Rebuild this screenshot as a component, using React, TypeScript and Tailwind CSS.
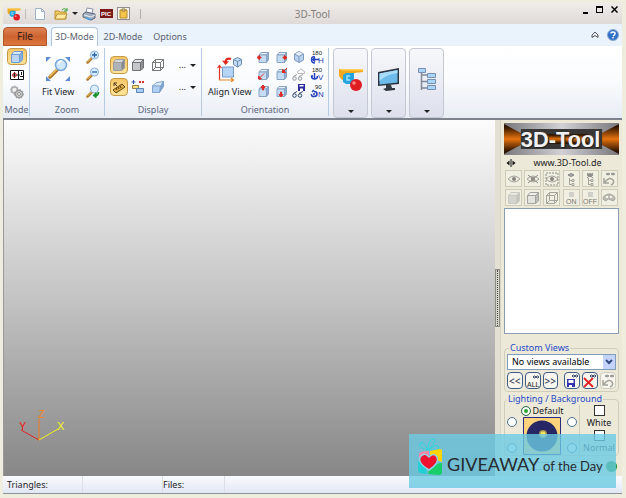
import { type ReactNode } from "react";
import { clsx } from "clsx";

type IconProps = { className?: string };

type CubeProps = {
    front?: string;
    top?: string;
    side?: string;
    stroke?: string;
    className?: string;
};

function Svg({ box, className, children }: { box: string; className?: string; children: ReactNode }) {
    return (
        <svg viewBox={box} className={clsx("block shrink-0", className)} fill="none" aria-hidden="true">
            {children}
        </svg>
    );
}

function Cube({ front = "#b9d5f3", top = "#dcebfa", side = "#86aedb", stroke = "#7f9cc4", className = "size-3.5" }: CubeProps) {
    return (
        <Svg box="0 0 14 14" className={className}>
            <path d="M1.500 4.500 4 1.500h8.500l-3 3z" fill={top} stroke={stroke} strokeLinejoin="round" />
            <path d="m9.500 4.500 3-3V10l-3 2.500z" fill={side} stroke={stroke} strokeLinejoin="round" />
            <path d="M1.500 4.500h8v8h-8z" fill={front} stroke={stroke} />
        </Svg>
    );
}

function LogoIcon({ className }: IconProps) {
    return (
        <Svg box="0 0 26 26" className={className}>
            <path d="M1 3h24v3L7 8v4l-3 2-3-4z" fill="#f5a81c" />
            <path d="M1 3h24v1.500H4z" fill="#ffd15c" />
            <path d="m5 9 3-2h8v8l-3 3H8l-3-2z" fill="#24a5df" />
            <path d="M12 10H9v4h3" stroke="#a5e2fa" strokeWidth="1.500" />
            <circle cx="18" cy="19" r="6" fill="#df1d25" />
            <circle cx="16" cy="17" r="1.800" fill="#ff8583" />
        </Svg>
    );
}

function Magnifier({ sign, className = "size-3.5" }: { sign: string; className?: string }) {
    return (
        <Svg box="0 0 14 14" className={className}>
            <path d="m1.500 12.500 4.500-4.500" stroke="#a9762b" strokeWidth="2.500" strokeLinecap="round" />
            <path d="m1.500 12 4-4" stroke="#f4c765" strokeLinecap="round" />
            <circle cx="8.500" cy="5" r="4" fill="#dceeff" stroke="#86aed8" />
            {sign === "plus" && <path d="M6 5h5M8.500 2.500v5" stroke="#2260ad" strokeWidth="1.300" />}
            {sign === "minus" && <path d="M6 5h5" stroke="#2260ad" strokeWidth="1.300" />}
            {sign === "back" && <path d="M12.500 8q0 4-4 3.500M10.500 9 8 11.500l2.500 2" stroke="#169329" strokeWidth="1.800" />}
        </Svg>
    );
}

function FitIcon() {
    return (
        <Svg box="0 0 26 26" className="size-[26px]">
            <path d="M1 6V1h5L1 6Zm19-5h5v5l-5-5ZM1 20v5h5l-5-5Zm24 0v5h-5l5-5Z" fill="#5c8dd4" />
            <path d="m5 21 8-8" stroke="#a77429" strokeWidth="3.500" strokeLinecap="round" />
            <path d="m5 20 7-7" stroke="#f4c765" strokeWidth="1.500" strokeLinecap="round" />
            <circle cx="16" cy="9" r="5.500" fill="#cfe8ff" stroke="#77a8de" strokeWidth="1.500" />
            <path d="M13 8q1-3 4-3" stroke="#fff" strokeWidth="1.500" />
        </Svg>
    );
}

function AlignIcon() {
    return (
        <Svg box="0 0 26 26" className="size-[26px]">
            <path d="M5.500 11h11v10h-11z" fill="#b6d4f6" stroke="#769bc6" />
            <path d="M2.500 24V10m-2 2 2-2.500 2 2.500" stroke="#e0302a" strokeWidth="1.200" />
            <path d="M2 24h14m-2-2 2.500 2-2.500 2" stroke="#e78a25" strokeWidth="1.200" />
            <path d="M14 3Q9 1.500 8.500 6" stroke="#e12620" strokeWidth="2.200" />
            <path d="M5 4.500 8.500 9 12 5.500z" fill="#e12620" />
            <path d="m16.500 3.500 4-2 4 2v5l-4 2.500-4-2.500z" fill="#c3dcf5" stroke="#6c8cb2" />
            <path d="m16.500 3.500 4 2 4-2M20.500 5.500V11" stroke="#6c8cb2" />
        </Svg>
    );
}

function ArrowCube({ arrow }: { arrow: string }) {
    return (
        <Svg box="0 0 14 14" className="size-3.5">
            <path d="M3 5 5 2.500h7.500l-2 2.500z" fill="#e4effb" stroke="#8aa3c2" />
            <path d="m10.500 5 2-2.500V10l-2 2.500z" fill="#8cb0d9" stroke="#8aa3c2" />
            <path d="M3 5h7.500v7.500H3z" fill="#c4dbf4" stroke="#8aa3c2" />
            <path d={arrow} fill="#df2821" stroke="#df2821" strokeLinejoin="round" />
        </Svg>
    );
}

function IsoCube() {
    return (
        <Svg box="0 0 14 14" className="size-3.5">
            <path d="m2.500 4 4.500-2.500L11.500 4v6L7 12.500 2.500 10z" fill="#b9d3f0" stroke="#7f9abb" />
            <path d="m3 4 4-2 4 2-4 2z" fill="#e6f0fb" />
            <path d="m2.500 4 4.500 2.500L11.500 4M7 6.500v6" stroke="#7f9abb" />
        </Svg>
    );
}

function GlassesIcon({ saved }: { saved?: boolean }) {
    return (
        <Svg box="0 0 14 14" className="size-3.5">
            {saved ? (
                <>
                    <path d="M6 0h7v7H6z" fill="#2b2b9f" />
                    <path d="M7.500 1h4v1.500h-4zM8 4.500h3V7H8z" fill="#fff" />
                </>
            ) : (
                <path d="M6 6.500q-1.500-2.500 1-3 1.500-3 4 0 2.500 1 1.500 3z" fill="#fafafa" stroke="#b9b9b9" />
            )}
            <path d="M1.500 9.500 5 7.500m2 2 4-2" stroke={saved ? "#344c70" : "#9c9c9c"} />
            <circle cx="2.500" cy="11.500" r="1.800" fill="#e5edf5" stroke={saved ? "#344c70" : "#9c9c9c"} />
            <circle cx="8" cy="11.500" r="1.800" fill="#e5edf5" stroke={saved ? "#344c70" : "#9c9c9c"} />
        </Svg>
    );
}

function RotateIcon({ degrees, axis }: { degrees: string; axis: string }) {
    return (
        <Svg box="0 0 14 14" className="size-3.5">
            <text x={degrees === "90" ? 5 : 2} y="5" fontSize="6" fontFamily="Liberation Sans, sans-serif" fill="#222">{degrees}</text>
            {axis === "H" && <path d="M5 7Q1.500 6 1.500 9.500T5 13M3 9.500h6M5 7.500l-2 2 2 2" stroke="#2442bd" strokeWidth="1.500" />}
            {axis === "V" && <path d="M4.500 6v6M1.500 9q0 3 3 3t3-3M1 9h2" stroke="#2442bd" strokeWidth="1.500" />}
            {axis === "N" && <path d="M4 6 2 8M4 7.500q3 0 3 2.500t-3 2.500T1.500 10M4 9v2" stroke="#2442bd" strokeWidth="1.500" />}
            <text x="8" y="13" fontSize="8" fontFamily="Liberation Sans, sans-serif" fill="#2442bd">{axis}</text>
        </Svg>
    );
}

function DrawingIcon() {
    return (
        <Svg box="0 0 14 12" className="h-3 w-3.5">
            <path d="M.5 1.500h13v9H.5z" fill="#fff" stroke="#111" />
            <path d="M2 6h8M4.500 3v6M8.500 2v8M10 7.500h3" stroke="#111" />
            <circle cx="4.500" cy="6" r="2" stroke="#d33" />
            <path d="M11.500 3v3" stroke="#111" />
        </Svg>
    );
}

function GearsIcon() {
    return (
        <Svg box="0 0 14 14" className="size-3.5">
            <circle cx="4.500" cy="5" r="3" fill="#eee" stroke="#aaa" strokeWidth="1.500" />
            <circle cx="4.500" cy="5" r="4" stroke="#aaa" strokeDasharray="1.500 1.500" />
            <circle cx="9" cy="9" r="3.500" fill="#ddd" stroke="#999" strokeWidth="1.500" />
            <circle cx="9" cy="9" r="4.500" stroke="#999" strokeDasharray="1.500 1.500" />
            <circle cx="9" cy="9" r="1.500" fill="#fff" stroke="#888" />
        </Svg>
    );
}

function MonitorIcon() {
    return (
        <Svg box="0 0 26 26" className="size-[26px]">
            <path d="m2 6 21-4v16L2 20z" fill="#2b3440" />
            <path d="m3.500 7.500 18-3.500v12.500l-18 2z" fill="#6dbbea" />
            <path d="m3.500 7.500 18-3.500v3Q11 8 3.500 15z" fill="#a9dcf8" />
            <path d="M10 19h5l1 3h3v2l-9 1-3-2 3-1z" fill="#333a43" />
        </Svg>
    );
}

function TreeIcon() {
    return (
        <Svg box="0 0 20 24" className="h-6 w-5">
            <path d="M4.500 5v18M4 8h6M4 14.500h6M4 21h6" stroke="#7f8998" strokeWidth="1.500" />
            <path d="M1.500 1.500h7v4h-7zM10.500 6.500h8v4h-8zM10.500 12.500h8v4h-8zM10.500 18.500h8v4h-8z" fill="#a8d5f8" stroke="#7790b2" />
        </Svg>
    );
}

function EyeIcon({ mark }: { mark?: string }) {
    return (
        <Svg box="0 0 14 14" className="size-3.5">
            <path d="M1 7q6-6 12 0-6 6-12 0Z" fill="#efeee4" stroke="#a3a39a" />
            <circle cx="7" cy="7" r="2" fill="#85857d" />
            {mark && <path d={mark} stroke="#8d8d84" strokeDasharray={mark.endsWith("z") ? "2 1" : undefined} />}
        </Svg>
    );
}

function EyeTree({ crossed }: { crossed?: boolean }) {
    return (
        <Svg box="0 0 14 14" className="size-3.5">
            <path d="M4 3q3-3 6 0-3 3-6 0Z" fill="#aaa" stroke="#888" />
            <path d="M5.500 6v7M5 8.500h3M5 12.500h3M8 7.500h2v2H8zM8 11.500h2v2H8z" stroke="#a5a59d" />
            {crossed && <path d="m4 1 6 5m0-5L4 6" stroke="#888" />}
        </Svg>
    );
}

function UndoEye() {
    return (
        <Svg box="0 0 14 14" className="size-3.5">
            <path d="M4 2q2-2 4 0-2 2-4 0Zm5 0q2-2 4 0-2 2-4 0Z" fill="#999" stroke="#999" />
            <path d="M2 6v5h5M3 10q5-6 8-2 2 3-2 5" stroke="#a2a299" strokeWidth="1.500" />
        </Svg>
    );
}

function RibbonButton({ label, active, className, children }: { label: string; active?: boolean; className?: string; children: ReactNode }) {
    return (
        <button
            type="button"
            aria-label={label}
            className={clsx(
                "flex items-center justify-center",
                active && "rounded-sm border border-[#c69a45] bg-gradient-to-b from-[#f7c768] to-[#ffe49a]",
                className,
            )}
        >
            {children}
        </button>
    );
}

function Group({ label, className, children }: { label: string; className?: string; children: ReactNode }) {
    return (
        <div className={clsx("flex flex-col justify-between border-r border-[#b4cbe3]", className)}>
            {children}
            <div className="text-center leading-3 text-[#5c6980]">{label}</div>
        </div>
    );
}

function BigButton({ label, children }: { label: string; children: ReactNode }) {
    return (
        <button
            type="button"
            aria-label={label}
            className="flex h-[70px] w-[35px] flex-col items-center justify-between rounded-sm border border-[#c3c8d3] bg-gradient-to-b from-[#f7f8fb] to-[#dce0ec] pt-4"
        >
            <span className="flex h-7 items-center">{children}</span>
            <span className="pb-1"><Caret /></span>
        </button>
    );
}

function Caret() {
    return (
        <Svg box="0 0 6 3" className="h-[3px] w-1.5">
            <path d="M0 0h6L3 3z" fill="#222" />
        </Svg>
    );
}

function TitleBar() {
    return (
        <header className="grid h-[21px] grid-cols-[1fr_auto_1fr] items-center bg-gradient-to-b from-[#f0ecea] to-[#dfdad7] px-1">
            <div className="flex items-center">
                <LogoIcon className="size-[14px]" />
                <span className="ml-1 h-2.5 w-px bg-[#c0bcb8]" />
                <button type="button" aria-label="New" className="ml-2">
                    <Svg box="0 0 12 14" className="h-3.5 w-3">
                        <path d="M1.500 1.500h6l3 3v8h-9z" fill="#fafdff" stroke="#9fb1c9" />
                        <path d="M7.500 1.500v3h3" stroke="#9fb1c9" />
                    </Svg>
                </button>
                <button type="button" aria-label="Open" className="ml-2 flex items-center gap-1">
                    <Svg box="0 0 14 14" className="size-3.5">
                        <path d="M1 4h4l1 1h6v7H1z" fill="#f4cf62" stroke="#b99231" />
                        <path d="m1 12 2-5h10l-2 5z" fill="#ffe9a0" stroke="#b99231" />
                        <path d="M8 3q3-3 5 1m0-3v3h-3" stroke="#36a136" />
                    </Svg>
                    <Caret />
                </button>
                <button type="button" aria-label="Print" className="ml-1">
                    <Svg box="0 0 14 14" className="size-3.5">
                        <path d="m4 6 1-5 6 1-1 5z" fill="#fff" stroke="#8a97ab" />
                        <path d="m1 7 3-2 9 2v4l-4 2-8-3z" fill="#9fadbf" stroke="#596575" />
                        <path d="m2 8 7 2 4-2" stroke="#e7edf4" />
                        <path d="m4 11 5 2" stroke="#4b9ce9" strokeWidth="1.500" />
                    </Svg>
                </button>
                <button type="button" aria-label="Save picture" className="ml-1">
                    <Svg box="0 0 13 9" className="h-[9px] w-[13px]">
                        <path d="M0 0h13v9H0z" fill="#7b1919" />
                        <text x="1" y="7" fontSize="6" fontWeight="bold" fontFamily="Liberation Sans, sans-serif" fill="#fff">PIC</text>
                    </Svg>
                </button>
                <button type="button" aria-label="Copy to clipboard" className="ml-1">
                    <Svg box="0 0 13 13" className="size-[13px]">
                        <path d="M.5.500h12v12H.5z" fill="#f6f3ee" stroke="#333" strokeDasharray="1 1" />
                        <path d="M3 3h7v8H3z" fill="#f4c44c" stroke="#b98a27" />
                        <path d="M5 2h3v2H5z" fill="#fff2c5" stroke="#957634" />
                    </Svg>
                </button>
                <span className="ml-2.5 h-2.5 w-px bg-[#b4b0ac]" />
            </div>
            <h1 className="text-[10px] leading-4 text-[#85817e]">3D-Tool</h1>
            <div className="flex items-start justify-end gap-2 self-start pt-[3px]">
                <button type="button" aria-label="Minimize" className="flex h-2 w-[5px] items-end"><span className="h-0.5 w-full bg-black" /></button>
                <button type="button" aria-label="Maximize" className="h-[7px] w-[7px] border border-t-2 border-black" />
                <button type="button" aria-label="Close">
                    <Svg box="0 0 7 7" className="size-[7px]"><path d="m.5.500 6 6m0-6-6 6" stroke="#000" strokeWidth="1.500" /></Svg>
                </button>
            </div>
        </header>
    );
}

function TabRow() {
    return (
        <nav className="flex h-[22px] items-end bg-[#eaf3fb] text-[9px] text-[#5a6270]">
            <button type="button" className="h-[19px] w-11 rounded-t-sm border border-[#b4562b] bg-gradient-to-b from-[#df8254] via-[#cc6330] to-[#dd773e] text-[10px] text-[#3b2018]">File</button>
            <button type="button" className="ml-1 h-[19px] w-[47px] rounded-t-sm border border-b-0 border-[#b1c6db] bg-white">3D-Mode</button>
            <button type="button" className="h-[19px] w-[50px]">2D-Mode</button>
            <button type="button" className="h-[19px] w-11">Options</button>
            <div className="ml-auto flex h-full items-center gap-2 pr-[3px]">
                <button type="button" aria-label="Collapse ribbon">
                    <Svg box="0 0 8 8" className="size-2"><path d="m1 4 3-3 3 3v2.500L4 4.500l-3 2z" stroke="#555" /></Svg>
                </button>
                <button type="button" aria-label="Help">
                    <Svg box="0 0 12 12" className="size-3">
                        <circle cx="6" cy="6" r="5.500" fill="#2f70c8" stroke="#8aa9cf" />
                        <path d="M4 4.500Q4 3 6 3t2 1.500T6 7M6 8v1.500" stroke="#fff" strokeWidth="1.500" />
                    </Svg>
                </button>
            </div>
        </nav>
    );
}

function Ribbon() {
    return (
        <div className="flex h-[74px] border-b-2 border-[#7c838c] bg-gradient-to-b from-white via-[#f9fbfd] to-[#e8edf5] py-0.5 pl-px">
            <Group label="Mode" className="w-[26px]">
                <div className="flex flex-col items-center gap-1">
                    <RibbonButton label="3D view" active className="h-[17px] w-5">
                        <Cube stroke="#6d9bd2" />
                    </RibbonButton>
                    <RibbonButton label="Drawing view"><DrawingIcon /></RibbonButton>
                    <RibbonButton label="Settings"><GearsIcon /></RibbonButton>
                </div>
            </Group>
            <Group label="Zoom" className="w-[75px]">
                <div className="flex justify-between pr-1 pl-3">
                    <button type="button" className="flex flex-col items-center gap-1 pt-2 text-[#20242c]">
                        <FitIcon />
                        <span className="leading-3">Fit View</span>
                    </button>
                    <div className="flex flex-col gap-[3px] pt-0.5">
                        <RibbonButton label="Zoom in"><Magnifier sign="plus" /></RibbonButton>
                        <RibbonButton label="Zoom out"><Magnifier sign="minus" /></RibbonButton>
                        <RibbonButton label="Previous zoom"><Magnifier sign="back" /></RibbonButton>
                    </div>
                </div>
            </Group>
            <Group label="Display" className="w-[97px]">
                <div className="grid grid-cols-[18px_20px_20px_18px_10px] items-center gap-y-1 pt-2 pl-[5px] text-[#222]">
                    <RibbonButton label="Shaded" active className="size-[18px]">
                        <Cube front="#aeb3b8" top="#d8dbde" side="#84898f" stroke="#9b9da0" />
                    </RibbonButton>
                    <RibbonButton label="Shaded with edges">
                        <Cube front="#c6c7ca" top="#e5e5e8" side="#8e9095" stroke="#707277" />
                    </RibbonButton>
                    <RibbonButton label="Wireframe">
                        <Svg box="0 0 14 14" className="size-3.5">
                            <path d="M1.500 4.500h8v8h-8zM4.500 1.500h8v8h-8zM1.500 4.500l3-3M9.500 4.500l3-3M9.500 12.500l3-3M1.500 12.500l3-3" stroke="#777" />
                        </Svg>
                    </RibbonButton>
                    <button type="button" aria-label="More display styles" className="text-right">...</button>
                    <span className="pl-1"><Caret /></span>
                    <RibbonButton label="Measure" active className="size-[18px]">
                        <Svg box="0 0 14 14" className="size-3.5">
                            <path d="m1 10 9-6 3 3-9 6z" fill="#dda73c" stroke="#5e4718" />
                            <path d="m4 8 1 2m1-3 1 2m1-3 1 2M2 3l3 3M2 6V3h3" stroke="#4e3b19" />
                        </Svg>
                    </RibbonButton>
                    <RibbonButton label="Explode">
                        <Svg box="0 0 14 14" className="size-3.5">
                            <path d="M1.500 5.500h6v3h-6z" fill="#ffe07a" stroke="#947f45" />
                            <path d="M5.500 8.500h7v4h-7z" fill="#a9cdf3" stroke="#5e83b0" />
                            <path d="M2.500 0v4M.5 2h4" stroke="#3051b5" />
                            <path d="m8 1 2 2m0-2L8 3m3-2 2 2m0-2-2 2" stroke="#df2929" />
                        </Svg>
                    </RibbonButton>
                    <RibbonButton label="Section">
                        <Svg box="0 0 14 14" className="size-3.5">
                            <path d="m1.500 6 4-3.500 7-1-3 5z" fill="#d8e9fa" stroke="#80a2ca" />
                            <path d="m9.500 6.500 3-5v5l-4 6z" fill="#77a4d6" stroke="#80a2ca" />
                            <path d="M1.500 6h8l-1 6.500h-7z" fill="#b0d0f2" stroke="#80a2ca" />
                        </Svg>
                    </RibbonButton>
                    <button type="button" aria-label="More display tools" className="text-right">...</button>
                    <span className="pl-1"><Caret /></span>
                </div>
            </Group>
            <Group label="Orientation" className="w-[127px]">
                <div className="flex justify-between pr-1 pl-1.5">
                    <button type="button" className="flex flex-col items-center gap-1 pt-2 text-[#20242c]">
                        <AlignIcon />
                        <span className="leading-3">Align View</span>
                    </button>
                    <div className="grid grid-cols-4 gap-x-1 gap-y-[3px] pt-0.5">
                        <RibbonButton label="Left view"><ArrowCube arrow="M5 7H3.500V5.500L1 7.500l2.500 2V8H5z" /></RibbonButton>
                        <RibbonButton label="Right view"><ArrowCube arrow="M9 7h1.500V5.500l2.500 2-2.500 2V8H9z" /></RibbonButton>
                        <RibbonButton label="Isometric view"><IsoCube /></RibbonButton>
                        <RibbonButton label="Rotate horizontally"><RotateIcon degrees="180" axis="H" /></RibbonButton>
                        <RibbonButton label="Front view"><ArrowCube arrow="m8 6.500-4 4M2.500 9v3h3z" /></RibbonButton>
                        <RibbonButton label="Back view"><ArrowCube arrow="m13 1-3 3M8.500 2.500v3h3z" /></RibbonButton>
                        <RibbonButton label="Own view"><GlassesIcon /></RibbonButton>
                        <RibbonButton label="Rotate vertically"><RotateIcon degrees="180" axis="V" /></RibbonButton>
                        <RibbonButton label="Top view"><ArrowCube arrow="M6.500 6V3.500H5L7 1l2 2.500H7.500V6z" /></RibbonButton>
                        <RibbonButton label="Bottom view"><ArrowCube arrow="M6.500 8v2.500H5L7 13l2-2.500H7.500V8z" /></RibbonButton>
                        <RibbonButton label="Save view"><GlassesIcon saved /></RibbonButton>
                        <RibbonButton label="Rotate by normal"><RotateIcon degrees="90" axis="N" /></RibbonButton>
                    </div>
                </div>
            </Group>
            <div className="flex gap-[3px] pl-1">
                <BigButton label="Tools"><LogoIcon className="size-[26px]" /></BigButton>
                <BigButton label="Screen"><MonitorIcon /></BigButton>
                <BigButton label="Model tree"><TreeIcon /></BigButton>
            </div>
        </div>
    );
}

function Axes() {
    return (
        <svg viewBox="0 0 50 40" className="mb-[30px] ml-3.5 h-10 w-[50px]" fill="none" fontFamily="Liberation Sans, sans-serif" fontSize="11">
            <path d="M21 34 3 24" stroke="#e52222" />
            <path d="M21 34V13" stroke="#ef7d1a" />
            <path d="m21 34 19-11" stroke="#f3f31b" />
            <text x="1" y="24" fill="#f01818">Y</text>
            <text x="20" y="12" fill="#f58220">Z</text>
            <text x="39" y="24" fill="#f7f71a">X</text>
        </svg>
    );
}

function Banner() {
    return (
        <svg viewBox="0 0 116 32" className="block h-8 w-full" preserveAspectRatio="none" role="img" aria-label="3D-Tool">
            <defs>
                <linearGradient id="metal" x1="0" x2="1">
                    <stop stopColor="#77777c" />
                    <stop offset=".5" stopColor="#d2d2d6" />
                    <stop offset="1" stopColor="#77777c" />
                </linearGradient>
                <linearGradient id="orange" x1="0" x2="0" y1="0" y2="1">
                    <stop offset=".1" stopColor="#2e1500" />
                    <stop offset=".5" stopColor="#e8730f" />
                    <stop offset=".9" stopColor="#2e1500" />
                </linearGradient>
            </defs>
            <path d="M0 0h116v32H0z" fill="url(#metal)" />
            <path d="m0 1 17 9h82l17-9v30l-17-9H17L0 31z" fill="url(#orange)" />
            <path d="M17 6h82v20H17z" fill="#393735" />
            <path d="M43 11h42v10H43z" fill="url(#orange)" />
            <text x="18" y="25" fontSize="22" fontWeight="bold" fontFamily="Liberation Sans, sans-serif" fill="#222">3D-Tool</text>
            <text x="17" y="24" fontSize="22" fontWeight="bold" fontFamily="Liberation Sans, sans-serif" fill="#f2f2f2">3D-Tool</text>
        </svg>
    );
}

function ToolButton({ label, children }: { label: string; children: ReactNode }) {
    return (
        <button type="button" aria-label={label} className="flex size-[17px] items-center justify-center border border-[#cecbb9] bg-[#f1efe2]">
            {children}
        </button>
    );
}

function SwitchIcon({ text }: { text: string }) {
    return (
        <Svg box="0 0 14 14" className="size-3.5">
            <path d="M5 1h5v5H5z" fill="#d0cfc9" />
            <text x={text === "ON" ? 2 : 0} y="13" fontSize="7" fontFamily="Liberation Sans, sans-serif" fill="#77776f">{text}</text>
        </Svg>
    );
}

function ViewButton({ label, disabled, children }: { label: string; disabled?: boolean; children: ReactNode }) {
    return (
        <button
            type="button"
            aria-label={label}
            disabled={disabled}
            className={clsx(
                "flex h-[17px] flex-1 items-center justify-center rounded-sm border bg-[#f6f5ee] text-[10px] leading-3",
                disabled ? "border-[#cfccbc]" : "border-[#3e5c85] text-[#1d2c48]",
            )}
        >
            {children}
        </button>
    );
}

function LightRadio({ label, checked }: { label: string; checked?: boolean }) {
    return (
        <input
            type="radio"
            name="light"
            aria-label={label}
            defaultChecked={checked}
            className="block size-2.5 shrink-0 appearance-none rounded-full border border-[#4b7290] bg-white checked:border-[#3e6f55] checked:bg-[#28a52c] checked:shadow-[inset_0_0_0_2px_white]"
        />
    );
}

function BackgroundOption({ label }: { label: string }) {
    return (
        <label className="flex flex-col items-center">
            <input type="checkbox" className="block size-[11px] appearance-none border border-[#333] bg-white" />
            <span className="leading-[14px]">{label}</span>
        </label>
    );
}

function SidePanel() {
    return (
        <aside className="flex w-[122px] shrink-0 flex-col border-l border-[#d8d4c4] bg-[#ece9d8] px-[3px] pt-[3px] text-[#222]">
            <Banner />
            <div className="flex h-[15px] items-center pl-0.5">
                <Svg box="0 0 10 8" className="h-2 w-2.5">
                    <path d="M5 0v8" stroke="#111" />
                    <path d="M3.500 1.500v5L.5 4zM6.500 1.500v5l3-2.500z" fill="#111" />
                </Svg>
                <a href="#home" className="flex-1 text-center text-[9px]">www.3D-Tool.de</a>
            </div>
            <div className="grid grid-cols-6 justify-items-center gap-y-0.5">
                <ToolButton label="Show"><EyeIcon /></ToolButton>
                <ToolButton label="Hide"><EyeIcon mark="m2 3 10 8m0-8L2 11" /></ToolButton>
                <ToolButton label="Show selection"><EyeIcon mark="M1 1h12v12H1z" /></ToolButton>
                <ToolButton label="Show branch"><EyeTree /></ToolButton>
                <ToolButton label="Hide branch"><EyeTree crossed /></ToolButton>
                <ToolButton label="Undo visibility"><UndoEye /></ToolButton>
                <ToolButton label="Solid"><Cube front="#d4d4ce" top="#e8e8e3" side="#c5c5bf" stroke="#c9c9c2" /></ToolButton>
                <ToolButton label="Solid with edges"><Cube front="#e4e4de" top="#eeeeea" side="#bebeb8" stroke="#a3a39b" /></ToolButton>
                <ToolButton label="Edges">
                    <Svg box="0 0 14 14" className="size-3.5">
                        <path d="M1.500 4.500h8v8h-8zM4.500 1.500h8v8h-8zM1.500 4.500l3-3M9.500 4.500l3-3M9.500 12.500l3-3M1.500 12.500l3-3" stroke="#a3a39b" />
                    </Svg>
                </ToolButton>
                <ToolButton label="On"><SwitchIcon text="ON" /></ToolButton>
                <ToolButton label="Off"><SwitchIcon text="OFF" /></ToolButton>
                <ToolButton label="Colour">
                    <Svg box="0 0 14 14" className="size-3.5">
                        <path d="M1 8q0-4 6-5 6 1 6 5-1 3-4 1t-4 0-4-1Z" fill="#bdbdb4" stroke="#a2a29a" />
                        <path d="M4 6h2m2 0h2" stroke="#f5f5ef" strokeWidth="2" />
                    </Svg>
                </ToolButton>
            </div>
            <div className="mt-0.5 min-h-24 flex-1 border border-[#8a9fb5] bg-white" />
            <fieldset className="mt-2 min-w-0 rounded border border-[#d0cdbc] px-0.5 pb-0.5">
                <legend className="ml-0.5 px-px leading-3 text-[#2449c9]">Custom Views</legend>
                <div className="relative">
                    <select aria-label="Custom Views" className="block h-4 w-full appearance-none border border-[#7f9db9] bg-white pl-1 text-[9px] leading-3 text-black">
                        <option>No views available</option>
                    </select>
                    <span className="pointer-events-none absolute inset-y-px right-px flex w-3 items-center justify-center bg-[#c3d3fb]">
                        <Svg box="0 0 8 6" className="h-1.5 w-2"><path d="m1 1 3 3 3-3" stroke="#344d85" strokeWidth="2" /></Svg>
                    </span>
                </div>
                <div className="mt-0.5 flex gap-0.5">
                    <ViewButton label="Previous view">&lt;&lt;</ViewButton>
                    <ViewButton label="All views">
                        <Svg box="0 0 14 14" className="size-3.5">
                            <path d="M7 3q1.500-2 3 0-1.500 2-3 0Zm3 0q1.500-2 3 0-1.500 2-3 0Z" stroke="#2c3e66" />
                            <text x="1" y="13" fontSize="7" fontFamily="Liberation Sans, sans-serif" fill="#222">ALL</text>
                        </Svg>
                    </ViewButton>
                    <ViewButton label="Next view">&gt;&gt;</ViewButton>
                    <span className="w-0.5" />
                    <ViewButton label="Save view">
                        <Svg box="0 0 14 14" className="size-3.5">
                            <path d="M7 2q1.500-2 3 0-1.500 2-3 0Zm3 0q1.500-2 3 0-1.500 2-3 0Z" stroke="#2c3e66" />
                            <path d="M2 5h8v8H2z" fill="#3434ad" />
                            <path d="M3.500 6h5v3h-5zM4 11h3v2H4z" fill="#fff" />
                        </Svg>
                    </ViewButton>
                    <ViewButton label="Delete view">
                        <Svg box="0 0 14 14" className="size-3.5">
                            <path d="M7 2q1.500-2 3 0-1.500 2-3 0Zm3 0q1.500-2 3 0-1.500 2-3 0Z" stroke="#2c3e66" />
                            <path d="m1 4 9 9m0-9-9 9" stroke="#e12222" strokeWidth="1.800" />
                        </Svg>
                    </ViewButton>
                    <ViewButton label="Undo" disabled><UndoEye /></ViewButton>
                </div>
            </fieldset>
            <fieldset className="mt-px min-w-0 rounded border border-[#d0cdbc]">
                <legend className="ml-0.5 px-px leading-3 text-[#2449c9]">Lighting / Background</legend>
                <div className="flex">
                    <div className="flex-1 border-r border-[#d0cdbc] px-0.5">
                        <label className="flex items-center justify-center gap-0.5 leading-3">
                            <LightRadio label="Default" checked />
                            Default
                        </label>
                        <div className="flex justify-between">
                            <div className="flex flex-col justify-between pb-0.5">
                                <LightRadio label="Top left light" />
                                <LightRadio label="Bottom left light" />
                            </div>
                            <Svg box="0 0 38 38" className="size-[38px]">
                                <path d="M.5.500h37v37H.5z" fill="#ffd37c" stroke="#2a2a80" />
                                <circle cx="19" cy="19" r="15.500" fill="#272765" />
                                <circle cx="20" cy="17" r="4" fill="#a89b50" />
                                <circle cx="20" cy="17" r="2.500" fill="#f2e45f" />
                            </Svg>
                            <div className="flex flex-col justify-between pb-0.5">
                                <LightRadio label="Top right light" />
                                <LightRadio label="Bottom right light" />
                            </div>
                        </div>
                    </div>
                    <div className="w-[38px]">
                        <BackgroundOption label="White" />
                        <BackgroundOption label="Normal" />
                    </div>
                </div>
            </fieldset>
            <div className="flex h-5 items-center gap-1.5 px-0.5">
                <span className="h-2 flex-1 rounded border border-[#aaa99e]" />
                <span className="size-[11px] rounded-full bg-[#168a22]" />
            </div>
        </aside>
    );
}

function StatusBar() {
    return (
        <footer className="flex h-[18px] items-center border-b border-[#8f9298] bg-gradient-to-b from-[#fafbfe] to-[#e1e7f3] text-[#242424]">
            <span className="w-[79px] pl-1">Triangles:</span>
            <span className="h-full w-20 border-l border-[#d9dee9]" />
            <span className="h-full w-[62px] border-l border-[#d9dee9] leading-[18px]">Files:</span>
            <span className="h-full flex-1 border-l border-[#d9dee9]" />
        </footer>
    );
}

function Giveaway() {
    return (
        <div className="absolute right-1.5 bottom-1.5 flex h-[54px] w-[207px] items-start bg-[#6ccae4]/80 pt-1 pl-2 text-[#252b30]">
            <Svg box="0 0 26 38" className="h-[38px] w-[26px]">
                <path d="M11 12Q1 10 3 5q4-2 8 7 0-10 5-11 5 1-5 11 9-7 11-3 0 4-11 3" stroke="#2fd6e0" />
                <path d="M2 15q4-2 10-2v7l-10 4z" fill="#f883a5" />
                <path d="m13 13 10-2q2 0 2 2v11l-12-4z" fill="#ffd400" />
                <path d="M1 23q5 3 8 7l1 6-7-1q-2-1-2-3z" fill="#21cfd5" />
                <path d="m12 31 6-5 7-1v9q0 3-3 3l-11-1z" fill="#16cf68" />
                <path d="M12 32Q-1 24 4 18q4-4 8 1 5-5 8 0 3 6-8 13Z" fill="#f0122f" stroke="#8fd5e6" strokeWidth="1.500" />
            </Svg>
            <span className="mt-4 ml-1 font-['Lato',sans-serif] text-[18px] leading-5 whitespace-nowrap">
                GIVEAWAY <span className="text-[13px]">of the Day</span>
            </span>
        </div>
    );
}

export default function App() {
    return (
        <div className="relative flex min-h-screen flex-col border-4 border-t-[3px] border-l-[3px] border-[#efedde] bg-[#ece9d8] font-['Noto_Sans',sans-serif] text-[9px]">
            <TitleBar />
            <TabRow />
            <Ribbon />
            <main className="flex flex-1">
                <div className="flex flex-1 items-end border-l border-[#999] bg-gradient-to-b from-[#fcfcfc] via-[#c4c4c4] to-[#878787]">
                    <Axes />
                </div>
                <div className="flex w-[5px] items-center bg-[#e4e1d3]">
                    <button type="button" aria-label="Resize panel" className="flex h-[58px] w-[5px] justify-center border border-[#8c8a82] bg-[#d8d6cb]">
                        <span className="h-full w-px border-l border-dotted border-[#444]" />
                    </button>
                </div>
                <SidePanel />
            </main>
            <StatusBar />
            <Giveaway />
        </div>
    );
}
